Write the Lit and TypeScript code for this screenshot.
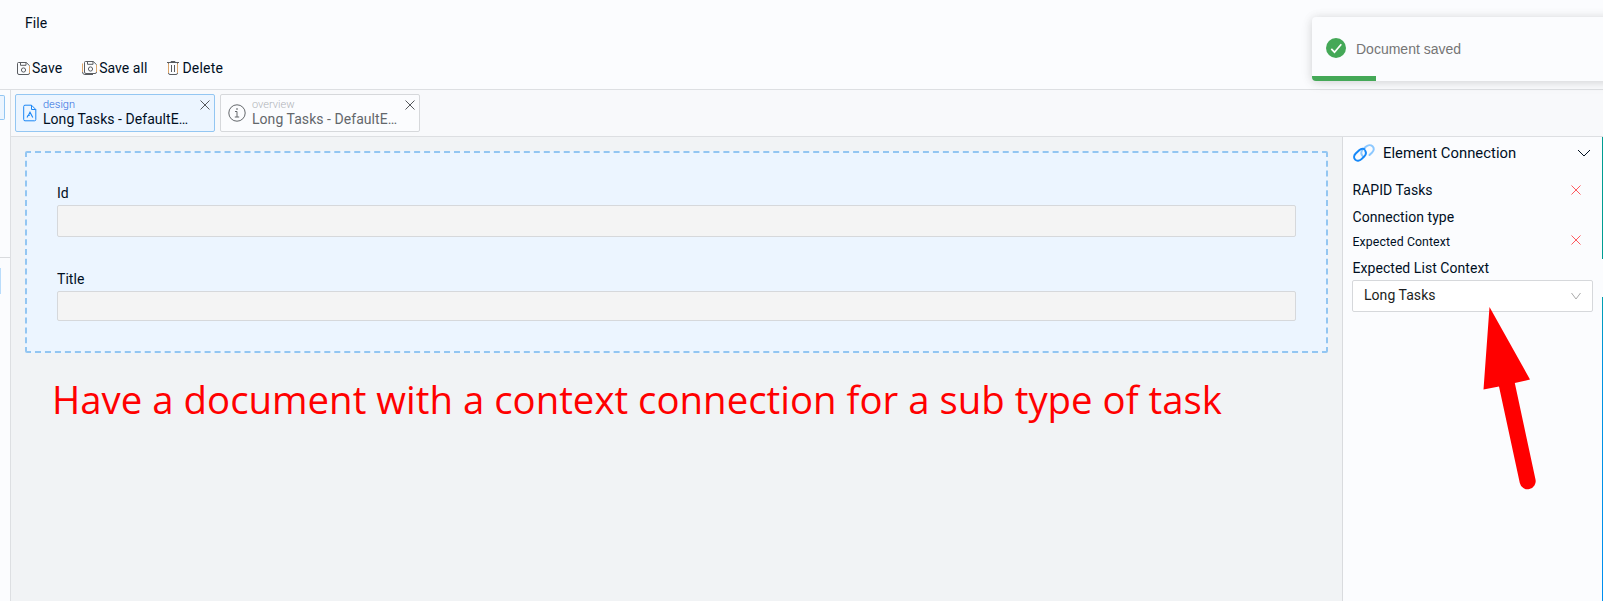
import { LitElement, html, css, svg } from "lit";
import { customElement } from "lit/decorators.js";

const saveShape = svg`
  <path d="M1.5 .5h7.8l3.2 3.2v7.3a1.5 1.5 0 0 1-1.5 1.5H2A1.5 1.5 0 0 1 .5 11V1.5a1 1 0 0 1 1-1z"/>
  <path d="M3.5 .5v2.8h5.5V.5"/><circle cx="6.5" cy="8" r="2.1"/>`;

@customElement("app-root")
export class AppRoot extends LitElement {
  static styles = css`
    :host { display: block; position: relative; width: 1603px; height: 601px; overflow: hidden;
      font: 14px/20px Roboto, sans-serif; letter-spacing: .05px; color: #000f1f; background: #fbfcfe; }
    * { box-sizing: border-box; }
    svg { display: block; flex: none; fill: none; stroke: currentColor; }
    .app { display: flex; flex-direction: column; height: 601px; }
    header { height: 90px; border-bottom: 1px solid #dddfe2; padding: 13px 0 0 17px; }
    .menu { padding-left: 8px; }
    .tools { display: flex; gap: 20px; margin-top: 25px; }
    .tool { display: flex; align-items: center; gap: 2px; }
    .tool:last-child { gap: 3px; letter-spacing: .2px; }
    .tool svg { color: #5a5d61; }
    .tool .warm { stroke: #dca56a; }
    .main { display: flex; flex: 1; min-height: 0; }
    .rail { width: 11px; border-right: 1px solid #dddfe2; display: flex; flex-direction: column; align-items: flex-start; }
    .rail .chip { width: 5px; height: 25px; margin-top: 5px; border: 1px solid #93c6f2; border-left: 0; border-radius: 0 2px 2px 0; background: #ecf5ff; }
    .rail .rule { width: 10px; height: 1px; background: #d9dbde; margin-top: 137px; }
    .rail .mark { width: 1px; height: 26px; background: #b9dcfb; margin-top: 10px; }
    .work { flex: 1; display: flex; flex-direction: column; min-width: 0; }
    .tabs { height: 47px; border-bottom: 1px solid #dddfe2; background: #f8f9fb; display: flex; gap: 5px; padding: 4px 0 0 4px; }
    .tab { width: 200px; height: 38px; border: 1px solid #d6d8db; border-radius: 2px; background: #fbfcfe; color: #63676b; display: flex; padding: 0 4px 0 7px; }
    .tab.on { background: #ecf5ff; border-color: #93c6f2; color: #000f1f; }
    .tab .ico { align-self: center; width: 18px; }
    .tab .txt { flex: 1; padding: 3px 0 0 6px; min-width: 0; white-space: nowrap; }
    .tab.on .ico { width: 14px; color: #1b86f5; }
    .kind { font-weight: 300; font-size: 11px; line-height: 13px; letter-spacing: 0; color: #b0b3b8; }
    .on .kind { color: #2a6be0; }
    .name { line-height: 16px; }
    .tab .x { margin-top: 5px; color: #55585c; }
    .body { flex: 1; display: flex; min-height: 0; }
    .canvas { flex: 1; background: #f1f3f5; padding: 14px 14px 0; }
    .form { height: 202px; border: 2px dashed #93c6f2; background: #ecf5ff; padding: 30px; border-radius: 2px; }
    .field { display: block; }
    .field + .field { margin-top: 32px; }
    .box { height: 32px; margin-top: 2px; border: 1px solid #d6d8db; border-radius: 2px; background: #f4f4f4; }
    .box.low { height: 30px; }
    .note { margin: 23px 0 0 26px; fill: #f00; stroke: none; font: 39px "Open Sans", "Noto Sans", sans-serif; letter-spacing: 0; overflow: visible; }
    .panel { width: 261px; border-left: 1px solid #d9dbde; display: flex; }
    .props { flex: 1; padding: 0 9px; }
    .head { display: flex; align-items: center; height: 31px; padding: 0 2px 0 1px; }
    .head .t { flex: 1; padding-left: 8px; font-size: 14.8px; }
    .row { display: flex; align-items: center; justify-content: space-between; padding: 0 12px 0 .5px; height: 27px; letter-spacing: .05px; }
    .row svg { color: #ff5a5f; }
    .small { font-size: 12.3px; height: 23px; padding-top: 1px; letter-spacing: .1px; }
    .small svg { margin-top: -4px; }
    .first { margin-top: 8px; }
    .last { height: 28px; padding-top: 2px; }
    .select { height: 32px; border: 1px solid #d6d8db; border-radius: 2px; background: #fff; display: flex; justify-content: space-between; align-items: center; padding: 0 11px; margin-top: -1px; color: #1c1e21; }
    .select span { margin-top: -2px; }
    .select svg { color: #aaa; }
    .scroll { width: 1px; display: flex; flex-direction: column; gap: 38px; }
    .scroll .a { height: 122px; background: #009d93; }
    .scroll .b { flex: 1; background: linear-gradient(#00a0b0, #0094e0 60px, #008ff0); }
    .toast { position: absolute; left: 1312px; top: 17px; width: 320px; height: 64px; border-radius: 4px 0 0 4px; background: #fbfcfe;
      box-shadow: 0 1px 10px rgba(0,0,0,.13), 0 2px 15px rgba(0,0,0,.06); font: 14px/20px "Liberation Sans", sans-serif; letter-spacing: 0; color: #757575;
      display: grid; grid-template-rows: 59px 5px; }
    .msg { display: flex; align-items: center; gap: 10px; padding: 3px 0 0 14px; }
    .msg span { padding-top: 2px; }
    .bar { width: 63.5px; background: #44a857; border-bottom-left-radius: 4px; }
    .arrow { position: absolute; left: 1480px; top: 305px; fill: #f00; stroke: none; }
  `;

  cross(size: number) {
    return html`<svg class="x" width=${size} height=${size} viewBox="0 0 10 10"><path d="M.5.5l9 9M9.5.5l-9 9"/></svg>`;
  }

  render() {
    return html`
      <div class="app">
        <header>
          <div class="menu">File</div>
          <div class="tools">
            <div class="tool"><svg width="13" height="13">${saveShape}<path class="warm" d="M12.5 4v7"/></svg>Save</div>
            <div class="tool"><svg width="15" height="14"><g transform="translate(2 0)">${saveShape}</g><path class="warm" d="M.5 2.5V11M14.5 4v7"/><path d="M.5 11a2.5 2.5 0 0 0 2.5 2.5h8"/></svg>Save all</div>
            <div class="tool"><svg width="12" height="14"><path d="M0 1.5h12M4 1.500v-1h4v1M1.5 1.5V12A1.5 1.5 0 0 0 3 13.5h6a1.5 1.5 0 0 0 1.5-1.5V1.500M4.5 4v7M7.5 4v7"/><path class="warm" d="M1.5 2.500v9.500M10.5 2.500v9.500"/></svg><span>Delete</span></div>
          </div>
        </header>
        <div class="main">
          <div class="rail"><div class="chip"></div><div class="rule"></div><div class="mark"></div></div>
          <div class="work">
            <div class="tabs">
              <div class="tab on">
                <svg class="ico" width="14" height="18"><path d="M2 1.2h6.5l4.3 4.3v10a1.3 1.3 0 0 1-1.3 1.3H2a1.3 1.3 0 0 1-1.3-1.3v-13A1.3 1.3 0 0 1 2 1.2zM8.5 1.2v4.3h4.3"/><path d="M4 13.5l1.2-2.2M9.8 13.5L7 8.2l-1.5 3M4.5 11.5h2.2" stroke-width="1.1"/></svg>
                <div class="txt"><div class="kind">design</div><div class="name">Long Tasks - DefaultE…</div></div>
                ${this.cross(10)}
              </div>
              <div class="tab">
                <svg class="ico" width="18" height="18"><circle cx="9" cy="9" r="8.2"/><path d="M7 7.5h2v5.5M6.8 13h4.4"/><path d="M8.3 5h1.4" stroke-width="1.4"/></svg>
                <div class="txt"><div class="kind">overview</div><div class="name">Long Tasks - DefaultE…</div></div>
                ${this.cross(10)}
              </div>
            </div>
            <div class="body">
              <div class="canvas">
                <div class="form">
                  <label class="field">Id<div class="box"></div></label>
                  <label class="field">Title<div class="box low"></div></label>
                </div>
                <svg class="note" width="1180" height="60"><text x="1" y="38" textLength="1170" lengthAdjust="spacingAndGlyphs">Have a document with a context connection for a sub type of task</text></svg>
              </div>
              <div class="panel">
                <div class="props">
                  <div class="head">
                    <svg width="22" height="18" viewBox="0 0 22 18" stroke-width="2" stroke-linecap="round">
                      <path stroke="#8cc8ff" d="M10 12.4C7.800 10.600 7.600 7.800 9.800 5.600l2.700-2.500C14.700 1 17.700.7 19.500 2.300s1.700 4.300-.4 6.200L16.500 11"/>
                      <path stroke="#1688f8" d="M11.500 5.200C9.700 4.400 7.800 4.800 6.200 6.300L2.700 9.500C.7 11.500.6 14 2.200 15.600s4.300 1.400 6.300-.5l2.700-2.500c1.900-1.900 2.200-4 1-5.900"/>
                    </svg>
                    <span class="t">Element Connection</span>
                    <svg width="14" height="8"><path d="M1 1l6 6 6-6"/></svg>
                  </div>
                  <div class="row first">RAPID Tasks${this.cross(10)}</div>
                  <div class="row">Connection type</div>
                  <div class="row small">Expected Context${this.cross(10)}</div>
                  <div class="row last">Expected List Context</div>
                  <div class="select"><span>Long Tasks</span><svg width="10" height="8"><path d="M.5 1L5 7l4.5-6"/></svg></div>
                </div>
                <div class="scroll"><div class="a"></div><div class="b"></div></div>
              </div>
            </div>
          </div>
        </div>
      </div>
      <div class="toast">
        <div class="msg"><svg width="20" height="20"><circle cx="10" cy="10" r="10" fill="#44a857" stroke="none"/><path d="M5.3 10.8l3.2 3.400 6.800-8" stroke="#fff" stroke-width="1.7"/></svg><span>Document saved</span></div>
        <div class="bar"></div>
      </div>
      <svg class="arrow" width="60" height="190"><path d="M9.5 2L50 74.5 34.8 78 55.5 174.5a8 8 0 0 1-15.7 3.5L19 81.5 3.5 84.5z"/></svg>
    `;
  }
}
